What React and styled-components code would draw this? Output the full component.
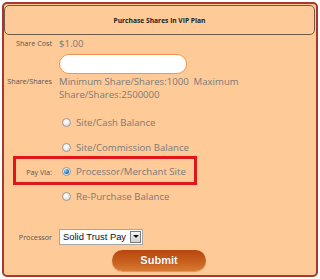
import React from 'react';
import styled, { createGlobalStyle } from 'styled-components';

const Global = createGlobalStyle`
  body {
    margin: 0;
    background: #ffffff;
    font-family: "Open Sans", "Liberation Sans", sans-serif;
  }
`;

const Panel = styled.div`
  position: relative;
  box-sizing: border-box;
  margin: 2px;
  width: 316px;
  height: 275px;
  background: #fecb98;
  border: 2px solid #a8392c;
  border-radius: 5px;
  padding: 1px 0 0 0;
`;

const Header = styled.div`
  box-sizing: border-box;
  height: 30px;
  margin-right: 1px;
  border: 1px solid #6e5a48;
  border-radius: 5px;
  display: flex;
  align-items: center;
  justify-content: center;
  font-size: 6.7px;
  font-weight: 700;
  color: #222;
`;

const Form = styled.div`
  display: grid;
  grid-template-columns: 48px 1fr;
  column-gap: 7px;
  align-items: center;
`;

const Label = styled.div`
  text-align: right;
  font-size: 7.2px;
  color: #555;
`;

const Value = styled.div`
  font-size: 9.6px;
  color: #7a7a7a;
  line-height: 13px;
`;

const CostRow = styled(Value)`
  height: 14px;
  margin-top: 2px;
`;

const SharesCell = styled.div`
  display: flex;
  flex-direction: column;
  margin-top: 3px;
  margin-bottom: 9px;
`;

const TextInput = styled.input`
  box-sizing: border-box;
  width: 128px;
  height: 20px;
  border: 1px solid #f59350;
  border-radius: 10px;
  background: #fff;
  outline: none;
  margin: 0 0 1px 0;
`;

const RadioRow = styled.div`
  display: flex;
  align-items: center;
  gap: 5px;
  height: 24.7px;
  padding-left: 3px;
`;

const Dot = styled.span`
  box-sizing: border-box;
  width: 9px;
  height: 9px;
  border-radius: 50%;
  border: 1px solid #9a9a9a;
  background: radial-gradient(circle at 40% 35%, #ffffff 0%, #e6e6e6 60%, #c8c8c8 100%);
  display: flex;
  align-items: center;
  justify-content: center;
  &::after {
    content: '';
    display: ${p => p.$on ? 'block' : 'none'};
    width: 5px;
    height: 5px;
    border-radius: 50%;
    background: radial-gradient(circle at 35% 35%, #9fd3ff 0%, #2a7bc4 55%, #0d3f7a 100%);
  }
`;

const Highlight = styled.div`
  position: absolute;
  left: 9px;
  top: 152px;
  width: 184px;
  height: 29px;
  box-sizing: border-box;
  border: 3px solid #e0161b;
  pointer-events: none;
`;

const Spacer = styled.div`
  grid-column: 1 / -1;
  height: ${p => p.$h}px;
`;

const Select = styled.div`
  box-sizing: border-box;
  display: flex;
  align-items: center;
  justify-content: space-between;
  width: 84px;
  height: 16px;
  background: #fff;
  border: 1px solid #a6a6a6;
  padding: 0 1px 0 3px;
  font-family: "Liberation Sans", Arial, sans-serif;
  font-size: 9.4px;
  white-space: nowrap;
  color: #111;
`;

const Arrow = styled.span`
  box-sizing: border-box;
  width: 11px;
  height: 12px;
  border: 1px solid #7b7b7b;
  background: linear-gradient(#f4f4f4, #d2d2d2);
  display: flex;
  align-items: center;
  justify-content: center;
  &::after {
    content: '';
    border-left: 3px solid transparent;
    border-right: 3px solid transparent;
    border-top: 3px solid #111;
  }
`;

const ButtonRow = styled.div`
  display: flex;
  justify-content: center;
  margin-top: 5px;
  padding-right: 2px;
`;

const Submit = styled.button`
  width: 94px;
  height: 21px;
  border: none;
  border-radius: 11px;
  background: linear-gradient(#b8470e, #c9621f 60%, #d67a35);
  box-shadow: 0 1px 1px rgba(120, 50, 10, 0.35);
  color: #fff;
  font-family: "Liberation Sans", Arial, sans-serif;
  font-weight: 700;
  font-size: 11px;
  text-shadow: 0 0 1px rgba(90, 30, 0, 0.6);
`;

const options = [
  'Site/Cash Balance',
  'Site/Commission Balance',
  'Processor/Merchant Site',
  'Re-Purchase Balance',
];

export default function App() {
  return (
    <>
      <Global />
      <Panel>
        <Header>Purchase Shares in VIP Plan</Header>
        <Form>
          <Label>Share Cost</Label>
          <CostRow>$1.00</CostRow>

          <Label>Share/Shares</Label>
          <SharesCell>
            <TextInput />
            <Value>Minimum Share/Shares:1000&nbsp; Maximum Share/Shares:2500000</Value>
          </SharesCell>

          {options.map((o, i) => (
            <React.Fragment key={o}>
              <Label>{i === 2 ? 'Pay Via:' : ''}</Label>
              <RadioRow>
                <Dot $on={i === 2} />
                <Value>{o}</Value>
              </RadioRow>
            </React.Fragment>
          ))}

          <Spacer $h={20} />
          <Label>Processor</Label>
          <Select>
            Solid Trust Pay
            <Arrow />
          </Select>
        </Form>
        <ButtonRow>
          <Submit>Submit</Submit>
        </ButtonRow>
        <Highlight />
      </Panel>
    </>
  );
}
